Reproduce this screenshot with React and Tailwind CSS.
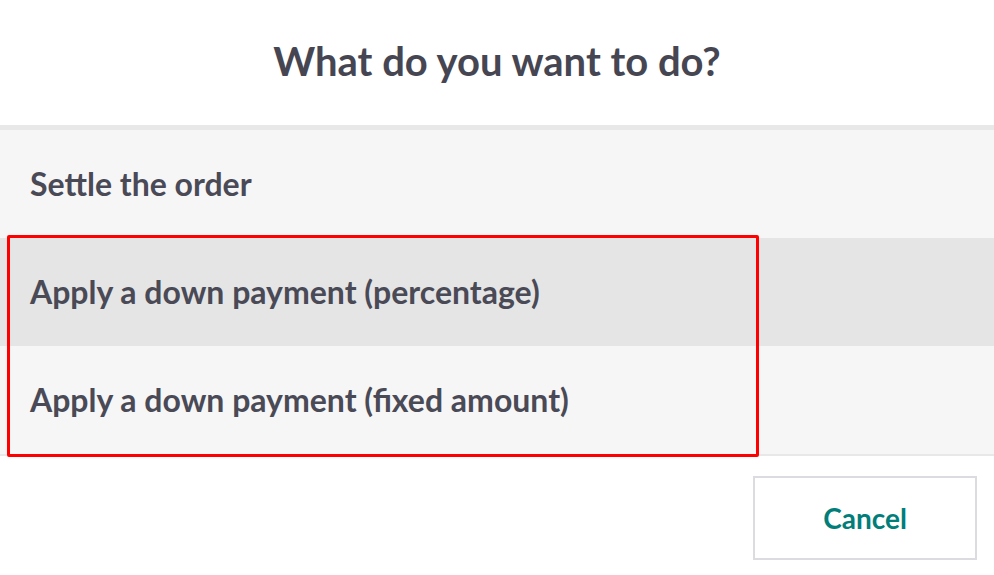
const options = [
  { label: "Settle the order", active: false },
  { label: "Apply a down payment (percentage)", active: true },
  { label: "Apply a down payment (fixed amount)", active: false },
];

export default function App() {
  return (
    <div className="w-[994px] h-[575px] bg-white overflow-hidden" style={{ fontFamily: "Lato, 'Liberation Sans', sans-serif" }}>
      {/* Header */}
      <div className="h-[125px] flex items-center justify-center">
        <h2 className="text-[40px] font-bold text-[#464653] pb-[4px]">What do you want to do?</h2>
      </div>

      {/* Options */}
      <div className="relative border-t-[5px] border-b-[2px] border-[#e8e8e8] bg-[#f6f6f6]">
        {options.map((opt, i) => (
          <div
            key={i}
            className={`h-[108px] flex items-center px-[30px] text-[32px] font-bold text-[#4a4a57] ${opt.active ? "bg-[#e5e5e5]" : "bg-[#f6f6f6]"}`}
          >
            {opt.label}
          </div>
        ))}
        <div className="absolute left-[7px] top-[105px] w-[752px] h-[222px] border-[3px] border-[#ff0000] rounded-[2px] pointer-events-none" />
      </div>

      {/* Footer */}
      <div className="flex justify-end px-[17px] pt-[20px]">
        <button className="w-[224px] h-[84px] border-2 border-[#dcdce0] bg-white text-[28px] font-bold text-[#017e7a]">
          Cancel
        </button>
      </div>
    </div>
  );
}
